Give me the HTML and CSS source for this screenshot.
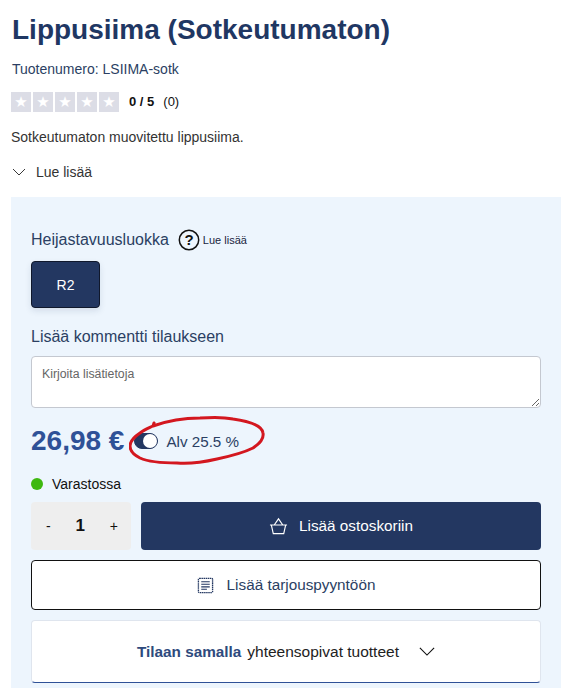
FILE: index.html
```html
<!DOCTYPE html>
<html lang="fi">
<head>
<meta charset="UTF-8" />
<title>Lippusiima (Sotkeutumaton)</title>
<link rel="stylesheet" href="styles.css">
</head>
<body>
    <div class="product">
        <div class="intro">
            <h1>Lippusiima (Sotkeutumaton)</h1>
            <div class="sku">Tuotenumero: LSIIMA-sotk</div>
            <div class="rating">
                <div class="stars">
                    <span class="star">★</span>
                    <span class="star">★</span>
                    <span class="star">★</span>
                    <span class="star">★</span>
                    <span class="star">★</span>
                </div>
                <span class="score">0 / 5</span>
                <span class="count">(0)</span>
            </div>
            <p class="desc">Sotkeutumaton muovitettu lippusiima.</p>
            <div class="more">
                <svg width="14" height="8" viewBox="0 0 14 8"><path d="M1 1l6 6 6-6" fill="none" stroke="#222" stroke-width="0.9"/></svg>
                <span>Lue lisää</span>
            </div>
        </div>

        <div class="panel">
            <div class="option-head">
                <span class="label">Heijastavuusluokka</span>
                <svg class="help" width="22" height="22" viewBox="0 0 22 22">
                    <circle cx="11" cy="11" r="9.7" fill="none" stroke="#111" stroke-width="1.5"/>
                    <text x="11" y="16" text-anchor="middle" class="help-mark">?</text>
                </svg>
                <span class="help-link">Lue lisää</span>
            </div>
            <button class="variant">R2</button>

            <div class="label comment-label">Lisää kommentti tilaukseen</div>
            <textarea class="comment" placeholder="Kirjoita lisätietoja"></textarea>

            <div class="price-row">
                <span class="price">26,98 €</span>
                <span class="toggle"><span class="knob"></span></span>
                <span class="vat">Alv 25.5 %</span>
                <svg class="scribble" width="138" height="52" viewBox="0 0 138 52">
                    <path d="M24 11C38 6 55 3 71 3C84 2 95 2 104 4C118 6 133 10 134 18C135 24 131 28 124 33C114 38 102 41 88 44C75 47 60 49 48 48C34 48 20 47 11 43C5 40 1 36 1 31C1 26 5 22 11 18C15 15 20 13 24 11l1-3" fill="none" stroke="#d3171f" stroke-width="3" stroke-linecap="round"/>
                </svg>
            </div>

            <div class="stock"><span class="dot"></span>Varastossa</div>

            <div class="buy-row">
                <div class="qty">
                    <span class="qty-btn">-</span>
                    <span class="qty-val">1</span>
                    <span class="qty-btn">+</span>
                </div>
                <button class="add-cart">
                    <svg width="19" height="18" viewBox="0 0 20 18" fill="none" stroke="#fff" stroke-width="1.2"><path d="M1 8h18M2.5 8l2 9h11l2-9M5.5 8L10 1.5 14.5 8"/></svg>
                    Lisää ostoskoriin
                </button>
            </div>

            <button class="add-quote">
                <svg width="17" height="17" viewBox="0 0 18 18" fill="none" stroke="#233761"><rect x="1.5" y="1.5" width="15" height="15" rx="1" stroke-width="1.4" stroke-dasharray="1.6 .6"/><path d="M4.5 5h9M4.5 7.7h9M4.5 10.4h9M4.5 13h6" stroke-width="1.2"/></svg>
                Lisää tarjouspyyntöön
            </button>

            <div class="related">
                <strong>Tilaan samalla</strong>
                <span>yhteensopivat tuotteet</span>
                <svg width="16" height="9" viewBox="0 0 18 10"><path d="M1 1l8 8 8-8" fill="none" stroke="#111" stroke-width="1.3"/></svg>
            </div>
        </div>
    </div>
</body>
</html>
```

FILE: styles.css
```css
:root {
    --navy: #233761;
    --blue: #2f5197;
    --panel: #edf5fd;
}

html, body {
    margin: 0;
    padding: 0;
    height: 688px;
    overflow: hidden;
    background: #fff;
    font-family: "Liberation Sans", Arial, sans-serif;
    color: #222;
}

.product {
    width: 550px;
    margin-left: 11px;
}

.intro {
    padding-left: 1px;
}

h1 {
    margin: 0;
    padding-top: 14px;
    font-size: 28px;
    line-height: 31px;
    font-weight: bold;
    color: #1f3763;
}

.sku {
    margin-top: 15px;
    font-size: 14px;
    line-height: 18px;
    color: #2b3f63;
}

.rating {
    display: flex;
    align-items: center;
    margin-top: 14px;
    margin-left: -1px;
    font-size: 13px;
    color: #111;
}

.stars {
    display: flex;
    gap: 2px;
    margin-right: 10px;
}

.star {
    width: 20px;
    height: 20px;
    background: #dcdde6;
    color: #fff;
    font-family: "DejaVu Sans", sans-serif;
    font-size: 15px;
    line-height: 20px;
    text-align: center;
}

.score {
    font-weight: bold;
    margin-right: 9px;
    margin-bottom: 2px;
}

.count {
    margin-bottom: 2px;
}

.desc {
    margin: 16px 0 0 -1px;
    font-size: 14px;
    line-height: 18px;
    color: #333;
}

.more {
    display: flex;
    align-items: center;
    gap: 10px;
    margin-top: 17px;
    height: 18px;
    font-size: 14px;
    color: #333;
}

.panel {
    margin-top: 16px;
    height: 491px;
    box-sizing: border-box;
    padding: 32px 20px 0;
    background: var(--panel);
}

.label {
    font-size: 16px;
    line-height: 20px;
    color: #2b3f63;
}

.option-head {
    display: flex;
    align-items: center;
}

.help {
    margin-left: 9px;
}

.help-mark {
    font-family: "Liberation Sans", sans-serif;
    font-size: 15px;
    font-weight: bold;
    fill: #111;
}

.help-link {
    margin-left: 3px;
    font-size: 11px;
    color: #1a2540;
}

.variant {
    display: block;
    width: 69px;
    height: 47px;
    margin-top: 10px;
    background: var(--navy);
    border: 1px solid #10182c;
    border-radius: 4px;
    box-shadow: 0 3px 6px rgba(35, 55, 97, 0.12);
    color: #fff;
    font-family: inherit;
    font-size: 14px;
}

.comment-label {
    margin-top: 19px;
}

.comment {
    display: block;
    width: 100%;
    height: 52px;
    box-sizing: border-box;
    margin-top: 9px;
    padding: 10px 10px;
    background: #fff;
    border: 1px solid #c4c8d0;
    border-radius: 4px;
    font-family: inherit;
    font-size: 12.3px;
}

.comment::placeholder {
    color: #666;
}

.price-row {
    position: relative;
    display: flex;
    align-items: center;
    margin-top: 16px;
    height: 34px;
}

.price {
    font-size: 28px;
    font-weight: bold;
    color: var(--blue);
}

.toggle {
    position: relative;
    width: 22px;
    height: 14px;
    margin-left: 10px;
    background: var(--navy);
    border: 1px solid var(--navy);
    border-radius: 8px;
}

.knob {
    position: absolute;
    right: 0;
    top: 0;
    width: 14px;
    height: 14px;
    background: #fff;
    border-radius: 50%;
}

.vat {
    margin-left: 8px;
    font-size: 15.2px;
    color: #2b3f63;
}

/* hand drawn mark on top of the price row */
.scribble {
    position: absolute;
    left: 98px;
    top: -9px;
}

.stock {
    display: flex;
    align-items: center;
    margin-top: 17px;
    font-size: 14px;
    line-height: 18px;
    color: #111;
}

.dot {
    width: 12px;
    height: 12px;
    margin-right: 9px;
    background: #3eb80f;
    border-radius: 50%;
}

.buy-row {
    display: flex;
    gap: 10px;
    margin-top: 9px;
}

.qty {
    display: flex;
    align-items: center;
    justify-content: space-between;
    box-sizing: border-box;
    width: 100px;
    height: 48px;
    padding: 0 13px 0 15px;
    background: #eee;
    border-radius: 4px;
    color: #111;
}

.qty-btn {
    font-size: 14px;
}

.qty-val {
    font-size: 17px;
    font-weight: bold;
}

.add-cart {
    display: flex;
    align-items: center;
    justify-content: center;
    gap: 11px;
    flex: 1;
    height: 48px;
    background: var(--navy);
    border: none;
    border-radius: 4px;
    color: #fff;
    font-family: inherit;
    font-size: 15.3px;
}

.add-quote {
    display: flex;
    align-items: center;
    justify-content: center;
    gap: 13px;
    width: 100%;
    height: 50px;
    margin-top: 10px;
    background: #fff;
    border: 1px solid #111;
    border-radius: 4px;
    color: #2b3f63;
    font-family: inherit;
    font-size: 15.3px;
}

.related {
    display: flex;
    align-items: center;
    justify-content: center;
    box-sizing: border-box;
    height: 63px;
    margin-top: 10px;
    background: #fff;
    border: 1px solid #dfe5ee;
    border-bottom: 1px solid var(--blue);
    border-radius: 4px;
    font-size: 15.5px;
    color: #222;
}

.related strong {
    margin-right: 6px;
    font-size: 15.3px;
    color: #2e4a7d;
}

.related svg {
    margin-left: 20px;
}
```
